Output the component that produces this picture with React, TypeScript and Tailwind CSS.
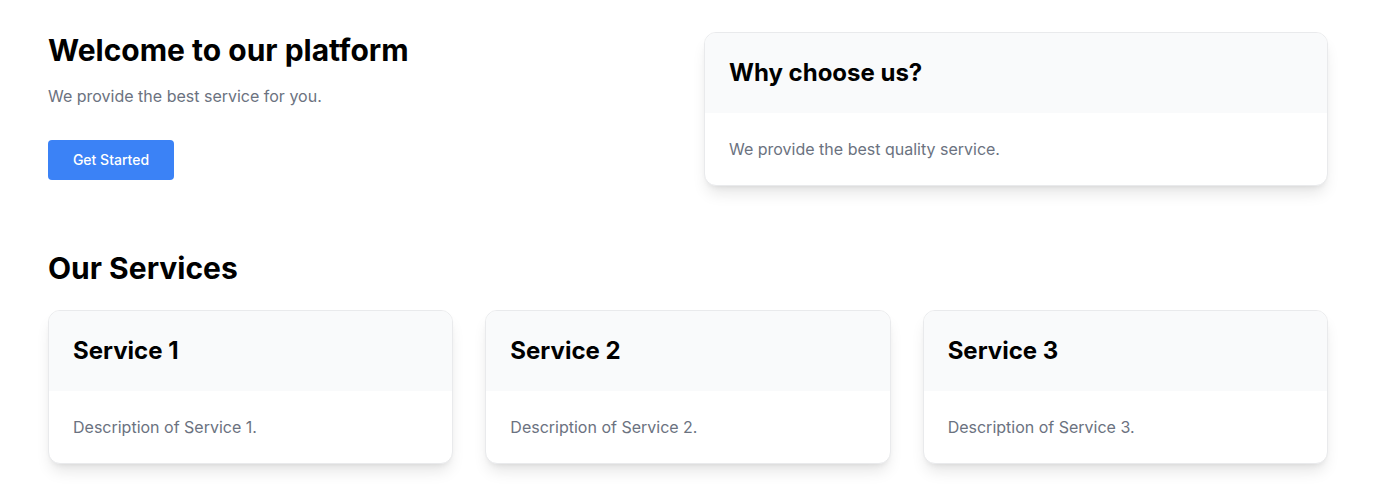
import React from 'react';

const services = [
  { title: 'Service 1', text: 'Description of Service 1.' },
  { title: 'Service 2', text: 'Description of Service 2.' },
  { title: 'Service 3', text: 'Description of Service 3.' },
];

function Card({ title, text }: { title: string; text: string }) {
  return (
    <div className="bg-white border border-[#e9eaec] rounded-xl shadow-lg overflow-hidden">
      <div className="bg-gray-50 p-6">
        <h3 className="text-2xl font-bold text-black">{title}</h3>
      </div>
      <div className="p-6">
        <p className="text-base text-[#6b7280]">{text}</p>
      </div>
    </div>
  );
}

export default function App() {
  return (
    <div className="min-h-screen bg-white font-['Inter',sans-serif]">
      <div className="max-w-7xl mx-auto py-8">
        <div className="grid grid-cols-2 gap-8">
          <div>
            <h1 className="text-3xl font-bold text-black mb-4">Welcome to our platform</h1>
            <p className="text-base text-[#6b7280] mb-8">We provide the best service for you.</p>
            <button className="bg-[#3b82f6] text-white text-sm font-medium w-[126px] h-10 rounded">Get Started</button>
          </div>
          <Card title="Why choose us?" text="We provide the best quality service." />
        </div>

        <h2 className="text-3xl font-bold text-black mt-16 mb-6">Our Services</h2>
        <div className="grid grid-cols-3 gap-8">
          {services.map((s) => (
            <Card key={s.title} title={s.title} text={s.text} />
          ))}
        </div>
      </div>
    </div>
  );
}
